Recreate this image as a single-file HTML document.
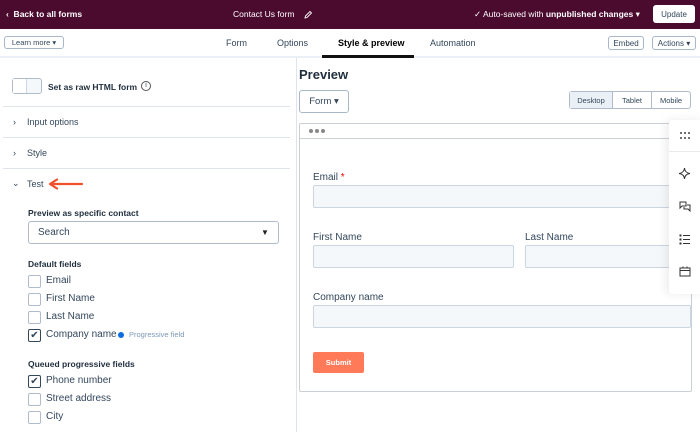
<!DOCTYPE html><html><head><style>
*{margin:0;padding:0;box-sizing:border-box}
body{width:700px;height:432px;overflow:hidden;background:#fff;font-family:"Liberation Sans",sans-serif;color:#33475b;position:relative}
.a{position:absolute;white-space:nowrap}
.cb{position:absolute;left:28px;width:13px;height:13px;border:1px solid #b0bccb;border-radius:2px;background:#fff}
.lbl{position:absolute;left:46px;font-size:10px;color:#33475b}
.inp{position:absolute;background:#f5f8fa;border:1px solid #cbd6e2;border-radius:2px}
.fl{position:absolute;font-size:10px;color:#33475b}
.btn{position:absolute;border:1px solid #a8b8c8;border-radius:3px;background:#fff;font-size:8px;display:flex;align-items:center;justify-content:center;color:#33475b}
.dot{position:absolute;width:2px;height:2px;background:#444;border-radius:50%}
</style></head><body>
<div class="a" style="left:0;top:0;width:700px;height:29px;background:#4b0b2f"></div>
<div class="a" style="left:6px;top:9px;color:#fff;font-size:8.5px;font-weight:bold">‹&nbsp; Back to all forms</div>
<div class="a" style="left:233px;top:9px;color:#fff;font-size:8.5px">Contact Us form</div>
<svg class="a" style="left:303px;top:10px" width="10" height="10" viewBox="0 0 10 10"><path d="M2 8 L2.5 6 L7 1.5 L8.5 3 L4 7.5 Z" fill="none" stroke="#fff" stroke-width="0.9"/></svg>
<div class="a" style="left:474px;top:9px;color:#fff;font-size:8.5px">✓ Auto-saved with <b>unpublished changes</b> ▾</div>
<div class="a" style="left:653px;top:5px;width:42px;height:18px;background:#fff;border-radius:3px;font-size:8px;display:flex;align-items:center;justify-content:center">Update</div>
<div class="a" style="left:0;top:56px;width:700px;height:2px;background:#eaf0f6"></div>
<div class="btn" style="left:4px;top:36px;width:60px;height:13px;font-size:7.5px">Learn more ▾</div>
<div class="a" style="left:226px;top:38px;font-size:9px">Form</div>
<div class="a" style="left:277px;top:38px;font-size:9px">Options</div>
<div class="a" style="left:338px;top:38px;font-size:9px;font-weight:bold;color:#000">Style &amp; preview</div>
<div class="a" style="left:322px;top:55px;width:92px;height:3px;background:#111"></div>
<div class="a" style="left:430px;top:38px;font-size:9px">Automation</div>
<div class="btn" style="left:608px;top:36px;width:36px;height:14px">Embed</div>
<div class="btn" style="left:652px;top:36px;width:44px;height:14px">Actions ▾</div>
<div class="a" style="left:296px;top:58px;width:1px;height:374px;background:#dfe3eb"></div>
<div class="a" style="left:12px;top:78px;width:30px;height:16px;border:1px solid #b0bccb;border-radius:3px;background:#f5f8fa"><div style="width:14px;height:14px;background:#fff;border-right:1px solid #cbd6e2"></div></div>
<div class="a" style="left:48px;top:82px;font-size:8.5px;font-weight:bold;color:#1f2d3d">Set as raw HTML form</div>
<div class="a" style="left:141px;top:81px;width:10px;height:10px;border:1px solid #555;border-radius:50%;font-size:7px;text-align:center;line-height:8px">i</div>
<div class="a" style="left:3px;top:106px;width:287px;height:1px;background:#dfe3eb"></div>
<div class="a" style="left:3px;top:137px;width:287px;height:1px;background:#dfe3eb"></div>
<div class="a" style="left:3px;top:168px;width:287px;height:1px;background:#dfe3eb"></div>
<div class="a" style="left:13px;top:117px;font-size:9px">›</div><div class="a" style="left:27px;top:117px;font-size:9px">Input options</div>
<div class="a" style="left:13px;top:148px;font-size:9px">›</div><div class="a" style="left:27px;top:148px;font-size:9px">Style</div>
<div class="a" style="left:12px;top:178px;font-size:9px">⌄</div><div class="a" style="left:27px;top:179px;font-size:9px">Test</div>
<svg class="a" style="left:46px;top:178px" width="38" height="12"><path d="M36 6 H6 M11 1.5 L4 6 L11 10.5" fill="none" stroke="#f0512b" stroke-width="2.2" stroke-linecap="round" stroke-linejoin="round"/></svg>
<div class="a" style="left:28px;top:208px;font-size:8.5px;font-weight:bold;color:#1f2d3d">Preview as specific contact</div>
<div class="a" style="left:28px;top:221px;width:251px;height:23px;border:1px solid #b0bccb;border-radius:3px"></div>
<div class="a" style="left:38px;top:227px;font-size:10px">Search</div>
<div class="a" style="left:261px;top:228px;font-size:8px;color:#222">▼</div>
<div class="a" style="left:28px;top:259px;font-size:8.5px;font-weight:bold;color:#1f2d3d">Default fields</div>
<div class="cb" style="top:275px"></div><div class="lbl" style="top:275px">Email</div>
<div class="cb" style="top:293px"></div><div class="lbl" style="top:293px">First Name</div>
<div class="cb" style="top:311px"></div><div class="lbl" style="top:311px">Last Name</div>
<div class="cb" style="top:329px;border-color:#33475b;font-size:10px;line-height:11px;text-align:center">✔</div><div class="lbl" style="top:329px">Company name</div>
<div class="a" style="left:118px;top:332px;width:6px;height:6px;border-radius:50%;background:#0b6ee0"></div>
<div class="a" style="left:129px;top:330px;font-size:7.5px;color:#7c98b6">Progressive field</div>
<div class="a" style="left:28px;top:359px;font-size:8.5px;font-weight:bold;color:#1f2d3d">Queued progressive fields</div>
<div class="cb" style="top:375px;border-color:#33475b;font-size:10px;line-height:11px;text-align:center">✔</div><div class="lbl" style="top:375px">Phone number</div>
<div class="cb" style="top:393px"></div><div class="lbl" style="top:393px">Street address</div>
<div class="cb" style="top:411px"></div><div class="lbl" style="top:411px">City</div>
<div class="a" style="left:299px;top:67px;font-size:13px;font-weight:bold;color:#1f2d3d">Preview</div>
<div class="btn" style="left:299px;top:90px;width:50px;height:23px;font-size:9.5px">Form ▾</div>
<div class="a" style="left:569px;top:91px;width:122px;height:18px;border:1px solid #b0bccb;border-radius:3px;font-size:7.5px;display:flex">
<div style="width:43px;background:#eaf0f6;border-right:1px solid #b0bccb;display:flex;align-items:center;justify-content:center">Desktop</div>
<div style="width:39px;border-right:1px solid #b0bccb;display:flex;align-items:center;justify-content:center">Tablet</div>
<div style="flex:1;display:flex;align-items:center;justify-content:center">Mobile</div></div>
<div class="a" style="left:299px;top:123px;width:393px;height:269px;border:1px solid #cbd0d6;border-radius:2px"></div>
<div class="a" style="left:299px;top:138px;width:393px;height:1px;background:#cbd0d6"></div>
<div class="a" style="left:309px;top:129px;width:4px;height:4px;border-radius:50%;background:#888"></div>
<div class="a" style="left:315px;top:129px;width:4px;height:4px;border-radius:50%;background:#888"></div>
<div class="a" style="left:321px;top:129px;width:4px;height:4px;border-radius:50%;background:#888"></div>
<div class="fl" style="left:313px;top:172px">Email <span style="color:#e00">*</span></div>
<div class="inp" style="left:313px;top:185px;width:378px;height:23px"></div>
<div class="fl" style="left:313px;top:232px">First Name</div>
<div class="inp" style="left:313px;top:245px;width:201px;height:23px"></div>
<div class="fl" style="left:525px;top:232px">Last Name</div>
<div class="inp" style="left:525px;top:245px;width:166px;height:23px"></div>
<div class="fl" style="left:313px;top:292px">Company name</div>
<div class="inp" style="left:313px;top:305px;width:378px;height:23px"></div>
<div class="a" style="left:313px;top:352px;width:51px;height:21px;background:#ff7a59;border-radius:2px;color:#fff;font-size:7.5px;font-weight:bold;display:flex;align-items:center;justify-content:center">Submit</div>
<div class="a" style="left:669px;top:120px;width:35px;height:174px;background:#fff;border-radius:4px;box-shadow:-3px 0 10px rgba(0,0,0,.08)"></div>
<div class="a" style="left:669px;top:151px;width:31px;height:1px;background:#eaeaea"></div>
<div class="dot" style="left:680px;top:132px"></div><div class="dot" style="left:684px;top:132px"></div><div class="dot" style="left:688px;top:132px"></div>
<div class="dot" style="left:680px;top:137px"></div><div class="dot" style="left:684px;top:137px"></div><div class="dot" style="left:688px;top:137px"></div>
<svg class="a" style="left:678px;top:167px" width="13" height="13" viewBox="0 0 13 13"><path d="M6.5 1 Q7 6 12 6.5 Q7 7 6.5 12 Q6 7 1 6.5 Q6 6 6.5 1Z" fill="none" stroke="#333" stroke-width="1"/></svg>
<svg class="a" style="left:679px;top:201px" width="12" height="11" viewBox="0 0 12 11"><path d="M1 1 H7 V5 H3 L1 7 Z M8 4 H11 V8 L11 10 L9 8 H5 V6" fill="none" stroke="#333" stroke-width="1"/></svg>
<svg class="a" style="left:679px;top:234px" width="12" height="11" viewBox="0 0 12 11"><path d="M4 1.5 H11 M4 5.5 H11 M4 9.5 H11" stroke="#333" stroke-width="1"/><rect x="0.5" y="0.5" width="2" height="2" fill="#333"/><rect x="0.5" y="4.5" width="2" height="2" fill="#333"/><rect x="0.5" y="8.5" width="2" height="2" fill="#333"/></svg>
<svg class="a" style="left:679px;top:266px" width="12" height="11" viewBox="0 0 12 11"><rect x="1" y="2" width="10" height="8" fill="none" stroke="#333"/><path d="M1 4.5 H11 M4 0.5 V2.5 M8 0.5 V2.5" stroke="#333"/></svg>
</body></html>
